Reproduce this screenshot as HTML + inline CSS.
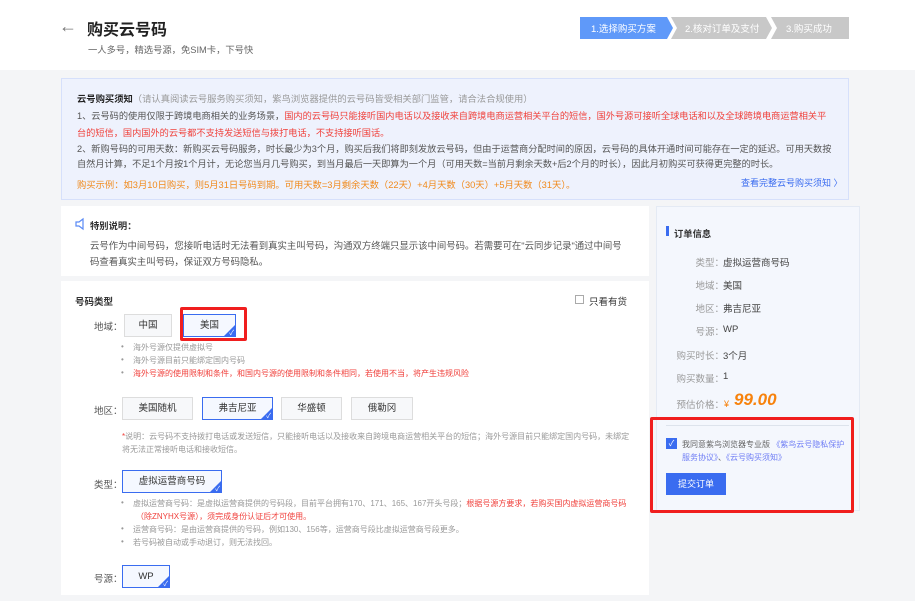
<!DOCTYPE html>
<html><head><meta charset="utf-8"><style>
*{margin:0;padding:0;box-sizing:border-box}
body{width:915px;height:601px;overflow:hidden;background:#f4f5f7;font-family:"Liberation Sans","Noto Sans CJK SC",sans-serif;color:#333;position:relative;font-size:9px}
.a{position:absolute;white-space:nowrap}
.hdr{position:absolute;left:0;top:0;width:915px;height:70px;background:#fff}
.red{color:#f0413c}
.gr{color:#999}
.btn{position:absolute;height:23px;border:1px solid #ddd;background:#f7f8fa;font-size:9.5px;text-align:center;line-height:21px;color:#333}
.sel{border:1px solid #3a6cf0;background:#f5f8ff;overflow:hidden}
.sel:after{content:"";position:absolute;right:0;bottom:0;border-left:11px solid transparent;border-bottom:11px solid #3a6cf0}
.sel:before{content:"✓";position:absolute;right:1px;bottom:-2px;color:#fff;font-size:7px;z-index:2;line-height:9px}
.lbl{position:absolute;font-size:9.5px;color:#555;white-space:nowrap}
.li{position:absolute;font-size:8px;white-space:nowrap}
.li:before{content:"•";position:absolute;left:-12px;color:#999}
.ord{position:absolute;font-size:9.5px;color:#999;text-align:right;width:68px;left:656px;white-space:nowrap}
.ov{position:absolute;font-size:9.5px;color:#444;left:723px;white-space:nowrap}
</style></head><body>
<div class="hdr"></div>
<div class="a" style="left:59px;top:16px;font-size:18px;color:#777">←</div>
<div class="a" style="left:87px;top:16px;font-size:16px;font-weight:bold;color:#222">购买云号码</div>
<div class="a" style="left:88px;top:42px;font-size:9.3px;color:#666">一人多号，精选号源，免SIM卡，下号快</div>
<svg class="a" style="left:580px;top:17px" width="270" height="22">
<polygon points="0,0 87,0 93,11 87,22 0,22" fill="#5f99f9"/>
<polygon points="91,0 186,0 192,11 186,22 91,22 97,11" fill="#c8c8c8"/>
<polygon points="191,0 269,0 269,22 191,22 197,11" fill="#c8c8c8"/>
<text x="11" y="15" fill="#fff" font-size="9.5" font-family="Liberation Sans,Noto Sans CJK SC,sans-serif">1.选择购买方案</text>
<text x="105" y="15" fill="#fff" font-size="9.5" font-family="Liberation Sans,Noto Sans CJK SC,sans-serif">2.核对订单及支付</text>
<text x="206" y="15" fill="#fff" font-size="9.5" font-family="Liberation Sans,Noto Sans CJK SC,sans-serif">3.购买成功</text>
</svg>

<div style="position:absolute;left:61px;top:78px;width:788px;height:122px;background:#eef2fd;border:1px solid #d6e0fb"></div>
<div class="a" style="left:77px;top:91px;font-size:9.3px"><b style="color:#222">云号购买须知</b><span class="gr">（请认真阅读云号服务购买须知，紫鸟浏览器提供的云号码皆受相关部门监管，请合法合规使用）</span></div>
<div class="a" style="left:77px;top:108px;font-size:9.2px;color:#555">1、云号码的使用仅限于跨境电商相关的业务场景，<span class="red">国内的云号码只能接听国内电话以及接收来自跨境电商运营相关平台的短信，国外号源可接听全球电话和以及全球跨境电商运营相关平</span></div>
<div class="a red" style="left:77px;top:125px;font-size:9.2px">台的短信，国内国外的云号都不支持发送短信与拨打电话，不支持接听国话。</div>
<div class="a" style="left:77px;top:141px;font-size:9.2px;color:#555">2、新购号码的可用天数：新购买云号码服务，时长最少为3个月，购买后我们将即刻发放云号码，但由于运营商分配时间的原因，云号码的具体开通时间可能存在一定的延迟。可用天数按</div>
<div class="a" style="left:77px;top:156px;font-size:9.2px;color:#555">自然月计算，不足1个月按1个月计，无论您当月几号购买，到当月最后一天即算为一个月（可用天数=当前月剩余天数+后2个月的时长），因此月初购买可获得更完整的时长。</div>
<div class="a" style="left:77px;top:177px;font-size:9.3px;color:#f08a1c">购买示例：如3月10日购买，则5月31日号码到期。可用天数=3月剩余天数（22天）+4月天数（30天）+5月天数（31天）。</div>
<div class="a" style="left:741px;top:176px;font-size:9px;color:#3a6cf0">查看完整云号购买须知 〉</div>

<div style="position:absolute;left:61px;top:206px;width:588px;height:70px;background:#fff"></div>
<svg class="a" style="left:74px;top:217px" width="14" height="14"><path d="M2 5h3l4-3v10l-4-3H2z" fill="none" stroke="#5a8af5" stroke-width="1.2"/></svg>
<div class="a" style="left:90px;top:218px;font-size:9.3px;font-weight:bold;color:#333">特别说明：</div>
<div class="a" style="left:90px;top:238px;font-size:9.4px;color:#555">云号作为中间号码，您接听电话时无法看到真实主叫号码，沟通双方终端只显示该中间号码。若需要可在"云同步记录"通过中间号</div>
<div class="a" style="left:90px;top:254px;font-size:9.4px;color:#555">码查看真实主叫号码，保证双方号码隐私。</div>

<div style="position:absolute;left:61px;top:281px;width:588px;height:314px;background:#fff"></div>
<div class="a" style="left:75px;top:294px;font-size:9.5px;font-weight:bold;color:#333">号码类型</div>
<div style="position:absolute;left:575px;top:295px;width:9px;height:9px;border:1px solid #aaa"></div>
<div class="a" style="left:589px;top:294px;font-size:9.5px">只看有货</div>
<div class="lbl" style="left:94px;top:319px">地域：</div>
<div class="btn" style="left:124px;top:314px;width:48px">中国</div>
<div class="btn sel" style="left:183px;top:314px;width:53px">美国</div>
<div style="position:absolute;left:180px;top:307px;width:67px;height:34px;border:3px solid #f01e1e;border-radius:2px"></div>
<div class="li gr" style="left:133px;top:342px">海外号源仅提供虚拟号</div>
<div class="li gr" style="left:133px;top:355px">海外号源目前只能绑定国内号码</div>
<div class="li red" style="left:133px;top:368px">海外号源的使用限制和条件，和国内号源的使用限制和条件相同，若使用不当，将产生违规风险</div>
<div class="lbl" style="left:94px;top:403px">地区：</div>
<div class="btn" style="left:122px;top:397px;width:71px">美国随机</div>
<div class="btn sel" style="left:202px;top:397px;width:71px">弗吉尼亚</div>
<div class="btn" style="left:281px;top:397px;width:61px">华盛顿</div>
<div class="btn" style="left:351px;top:397px;width:62px">俄勒冈</div>
<div class="a gr" style="left:122px;top:431px;font-size:8px"><span class="red">*</span>说明：云号码不支持拨打电话或发送短信，只能接听电话以及接收来自跨境电商运营相关平台的短信；海外号源目前只能绑定国内号码，未绑定</div>
<div class="a gr" style="left:122px;top:444px;font-size:8px">将无法正常接听电话和接收短信。</div>
<div class="lbl" style="left:94px;top:477px">类型：</div>
<div class="btn sel" style="left:122px;top:470px;width:100px">虚拟运营商号码</div>
<div class="li gr" style="left:133px;top:498px">虚拟运营商号码：是虚拟运营商提供的号码段，目前平台拥有170、171、165、167开头号段；<span class="red">根据号源方要求，若购买国内虚拟运营商号码</span></div>
<div class="a red" style="left:136px;top:511px;font-size:8px">（除ZNYHX号源），须完成身份认证后才可使用。</div>
<div class="li gr" style="left:133px;top:524px">运营商号码：是由运营商提供的号码，例如130、156等，运营商号段比虚拟运营商号段更多。</div>
<div class="li gr" style="left:133px;top:537px">若号码被自动或手动退订，则无法找回。</div>
<div class="lbl" style="left:94px;top:571px">号源：</div>
<div class="btn sel" style="left:122px;top:565px;width:48px">WP</div>

<div style="position:absolute;left:656px;top:206px;width:204px;height:305px;background:#f4f7fd;border:1px solid #e4eaf4"></div>
<div style="position:absolute;left:666px;top:226px;width:3px;height:10px;background:#3a6cf0"></div>
<div class="a" style="left:674px;top:226px;font-size:9.3px;font-weight:bold">订单信息</div>
<div class="ord" style="top:255px">类型：</div><div class="ov" style="top:255px">虚拟运营商号码</div>
<div class="ord" style="top:278px">地域：</div><div class="ov" style="top:278px">美国</div>
<div class="ord" style="top:301px">地区：</div><div class="ov" style="top:301px">弗吉尼亚</div>
<div class="ord" style="top:324px">号源：</div><div class="ov" style="top:324px">WP</div>
<div class="ord" style="top:348px">购买时长：</div><div class="ov" style="top:348px">3个月</div>
<div class="ord" style="top:371px">购买数量：</div><div class="ov" style="top:371px">1</div>
<div class="ord" style="top:397px">预估价格：</div>
<div class="a" style="left:724px;top:399px;font-size:9px;color:#f7820c">¥</div>
<div class="a" style="left:734px;top:390px;font-size:17px;font-weight:bold;font-style:italic;color:#f7820c">99.00</div>
<div style="position:absolute;left:666px;top:425px;width:183px;height:1px;background:#dde3ec"></div>
<div style="position:absolute;left:666px;top:438px;width:11px;height:11px;background:#3a6cf0;color:#fff;font-size:8px;text-align:center;line-height:11px">✓</div>
<div class="a" style="left:682px;top:439px;font-size:8px;color:#666">我同意紫鸟浏览器专业版 <span style="color:#6f7ef5">《紫鸟云号隐私保护</span></div>
<div class="a" style="left:682px;top:452px;font-size:8px;color:#6f7ef5">服务协议》<span style="color:#666">、</span>《云号购买须知》</div>
<div style="position:absolute;left:666px;top:473px;width:60px;height:22px;background:#3a6cf0;color:#fff;font-size:9px;text-align:center;line-height:22px">提交订单</div>
<div style="position:absolute;left:650px;top:417px;width:204px;height:96px;border:3px solid #f01e1e;border-radius:2px"></div>
</body></html>
